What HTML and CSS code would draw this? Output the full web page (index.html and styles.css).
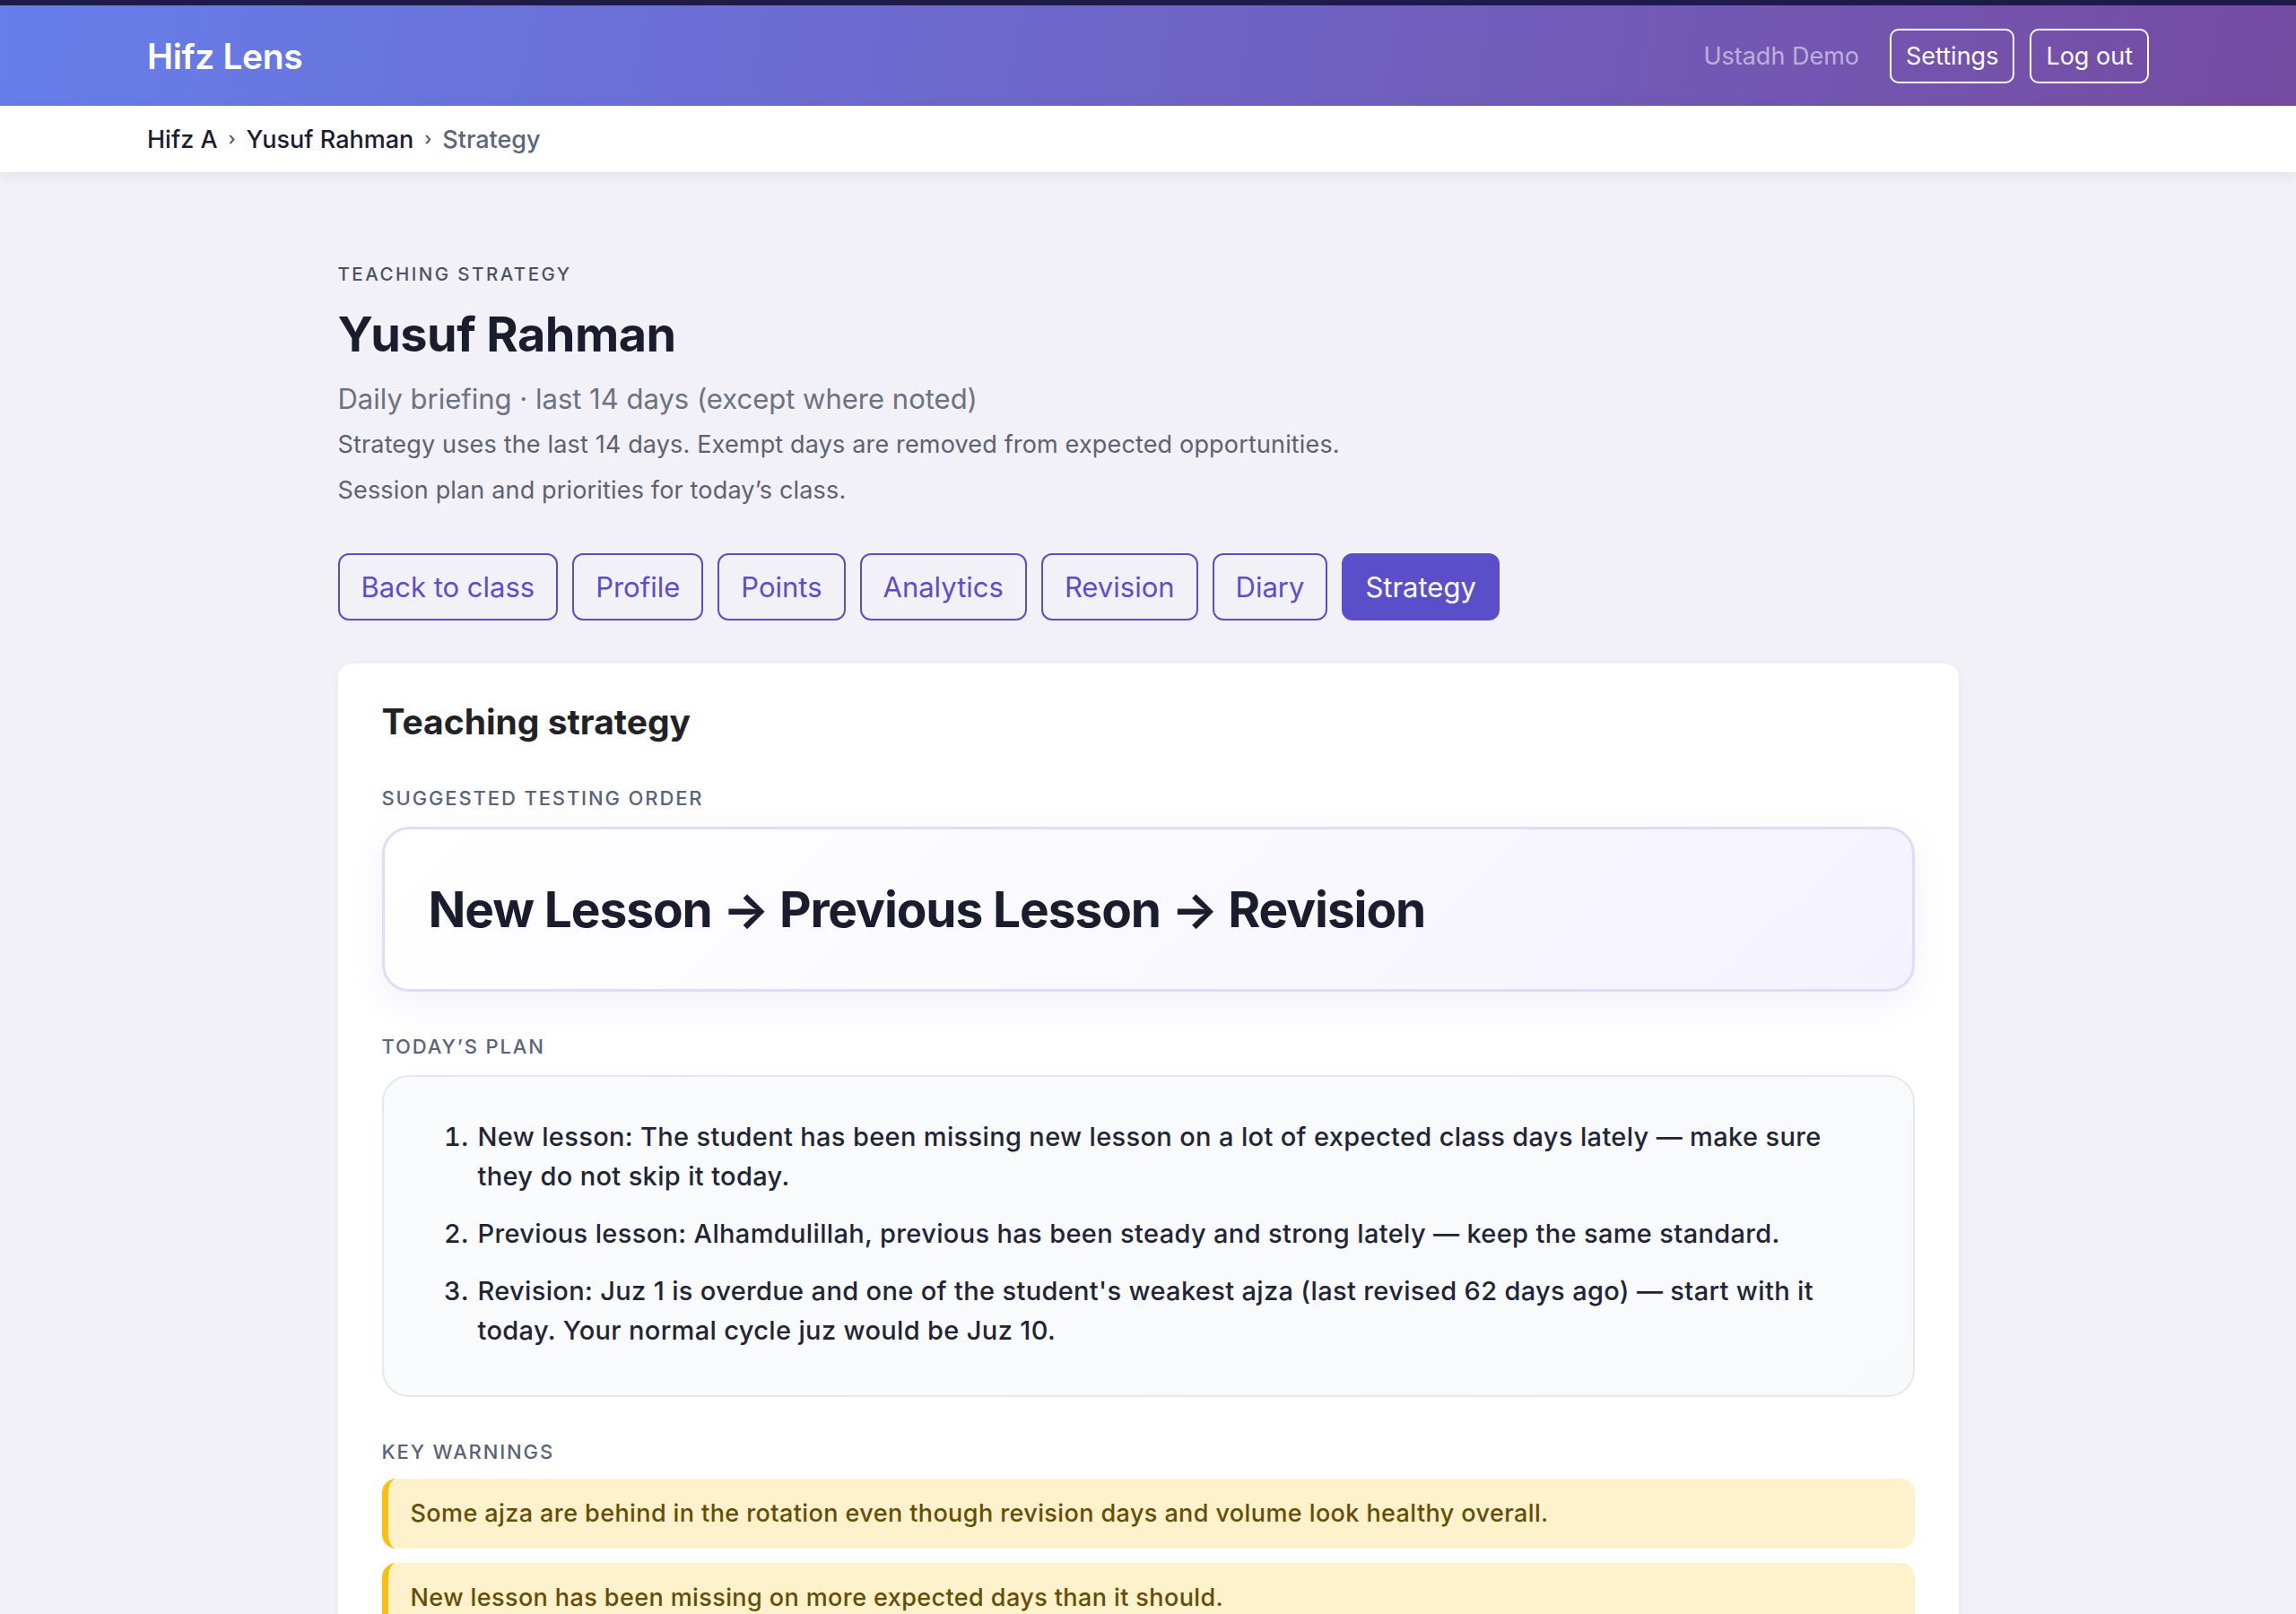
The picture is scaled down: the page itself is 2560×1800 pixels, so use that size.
FILE: index.html
```html
<!DOCTYPE html>
<html lang="en">
<head>
    <meta charset="UTF-8">
    <meta name="viewport" content="width=device-width, initial-scale=1.0">
    <title>Strategy - Hifz Lens</title>
    <link rel="stylesheet" href="styles.css">
</head>
<body>
    <header class="topbar">
        <div class="topbar-inner">
            <a class="brand" href="#">Hifz Lens</a>
            <div class="user-nav">
                <span class="user-name">Ustadh Demo</span>
                <a class="nav-btn" href="#">Settings</a>
                <a class="nav-btn" href="#">Log out</a>
            </div>
        </div>
    </header>

    <div class="crumbs">
        <div class="crumbs-inner">
            <a href="#">Hifz A</a>
            <span class="sep">›</span>
            <a href="#">Yusuf Rahman</a>
            <span class="sep">›</span>
            <span class="current">Strategy</span>
        </div>
    </div>

    <main class="page">
        <div class="eyebrow">Teaching strategy</div>
        <h1 class="student-name">Yusuf Rahman</h1>
        <p class="lead">Daily briefing · last 14 days (except where noted)</p>
        <p class="note">Strategy uses the last 14 days. Exempt days are removed from expected opportunities.</p>
        <p class="note">Session plan and priorities for today’s class.</p>

        <nav class="tabs">
            <a class="tab" href="#">Back to class</a>
            <a class="tab" href="#">Profile</a>
            <a class="tab" href="#">Points</a>
            <a class="tab" href="#">Analytics</a>
            <a class="tab" href="#">Revision</a>
            <a class="tab" href="#">Diary</a>
            <a class="tab active" href="#">Strategy</a>
        </nav>

        <section class="card">
            <h2 class="card-title">Teaching strategy</h2>

            <div class="section-label">Suggested testing order</div>
            <div class="order-box">New Lesson → Previous Lesson → Revision</div>

            <div class="section-label">Today’s plan</div>
            <div class="plan-box">
                <ol class="plan-list">
                    <li>New lesson: The student has been missing new lesson on a lot of expected class days lately — make sure they do not skip it today.</li>
                    <li>Previous lesson: Alhamdulillah, previous has been steady and strong lately — keep the same standard.</li>
                    <li>Revision: Juz 1 is overdue and one of the student's weakest ajza (last revised 62 days ago) — start with it today. Your normal cycle juz would be Juz 10.</li>
                </ol>
            </div>

            <div class="section-label">Key warnings</div>
            <div class="warning">Some ajza are behind in the rotation even though revision days and volume look healthy overall.</div>
            <div class="warning">New lesson has been missing on more expected days than it should.</div>
        </section>
    </main>
</body>
</html>
```

FILE: styles.css
```css
body {
    margin: 0;
    font-family: Inter, "Liberation Sans", sans-serif;
    background-color: #f2f1f7;
    color: #1c2033;
}
a {
    text-decoration: none;
    color: inherit;
}

/* header */
.topbar {
    border-top: 6px solid #1e1b4b;
    height: 112px;
    background: linear-gradient(100deg, #667eea 0%, #764ba2 100%);
}
.topbar-inner {
    max-width: 2232px;
    height: 100%;
    margin: 0 auto;
    display: flex;
    align-items: center;
    justify-content: space-between;
}
.brand {
    color: #fff;
    font-size: 39px;
    font-weight: 600;
    letter-spacing: -0.01em;
}
.user-nav {
    display: flex;
    align-items: center;
    gap: 17px;
}
.user-name {
    color: rgba(255, 255, 255, 0.55);
    font-size: 27px;
    margin-right: 17px;
}
.nav-btn {
    color: #fff;
    font-size: 27px;
    border: 2px solid #fff;
    border-radius: 10px;
    padding: 0 16px;
    line-height: 57px;
}

/* breadcrumb */
.crumbs {
    background: #fff;
    height: 74px;
    box-shadow: 0 4px 14px rgba(30, 27, 75, 0.07);
}
.crumbs-inner {
    max-width: 2232px;
    height: 100%;
    margin: 0 auto;
    display: flex;
    align-items: center;
    gap: 12px;
    font-size: 27px;
    font-weight: 500;
}
.crumbs-inner a {
    color: #1a1d2e;
}
.crumbs-inner .sep {
    color: #4b5263;
    font-size: 20px;
}
.crumbs-inner .current {
    color: #5d6679;
}

/* page */
.page {
    width: 1807px;
    margin: 0 auto;
    padding: 102px 0 60px;
}
.eyebrow {
    font-size: 20.5px;
    line-height: 24px;
    text-transform: uppercase;
    letter-spacing: 0.12em;
    color: #4b5263;
    font-weight: 500;
}
.student-name {
    margin: 21px 0 0;
    font-size: 54px;
    line-height: 68px;
    font-weight: 700;
    letter-spacing: -0.01em;
    color: #1a1d2e;
}
.lead {
    margin: 18px 0 0;
    font-size: 31px;
    line-height: 40px;
    color: #6b7280;
}
.note {
    margin: 11px 0 0;
    font-size: 27px;
    line-height: 40px;
    letter-spacing: 0.006em;
    color: #5b6270;
}
.tabs {
    display: flex;
    gap: 16px;
    margin-top: 50px;
}
.tab {
    font-size: 31px;
    line-height: 71px;
    padding: 0 24px;
    border: 2px solid #5b4fc9;
    border-radius: 12px;
    color: #5b4fc9;
}
.tab.active {
    background: #5b4fc9;
    color: #fff;
}

/* strategy card */
.card {
    margin-top: 48px;
    background: #fff;
    border-radius: 16px;
    padding: 41px 49px 60px;
    box-shadow: 0 2px 12px rgba(30, 27, 75, 0.04);
}
.card-title {
    margin: 0;
    font-size: 39px;
    line-height: 48px;
    font-weight: 700;
    color: #1f2328;
}
.section-label {
    margin-top: 47px;
    font-size: 22px;
    line-height: 28px;
    text-transform: uppercase;
    letter-spacing: 0.085em;
    color: #5a6478;
    font-weight: 500;
}
.order-box {
    margin-top: 18px;
    padding: 54px 49px;
    border: 3px solid #e0dcf7;
    border-radius: 30px;
    background: linear-gradient(135deg, #ffffff 0%, #f4f2fe 100%);
    box-shadow: 0 12px 40px rgba(91, 79, 201, 0.08);
    font-size: 55px;
    line-height: 70px;
    font-weight: 700;
    letter-spacing: -0.02em;
    color: #1a1d2e;
}
.plan-box {
    margin-top: 18px;
    padding: 45px 49px 50px;
    border: 2px solid #e6e8ec;
    border-radius: 30px;
    background: linear-gradient(135deg, #fafbfc 0%, #f8f9fb 100%);
}
.plan-list {
    margin: 0;
    padding-left: 54px;
    font-size: 29px;
    line-height: 44px;
    letter-spacing: 0.012em;
    font-weight: 500;
    color: #1f2537;
}
.plan-list li {
    padding-left: 2px;
}
.plan-list li + li {
    margin-top: 20px;
}
.warning {
    margin-top: 16px;
    padding: 19px 25px;
    border-left: 7px solid #fbbf0e;
    border-radius: 16px;
    background: #fef2cd;
    color: #664d03;
    font-size: 27px;
    line-height: 40px;
    letter-spacing: 0.015em;
    font-weight: 500;
}
```
